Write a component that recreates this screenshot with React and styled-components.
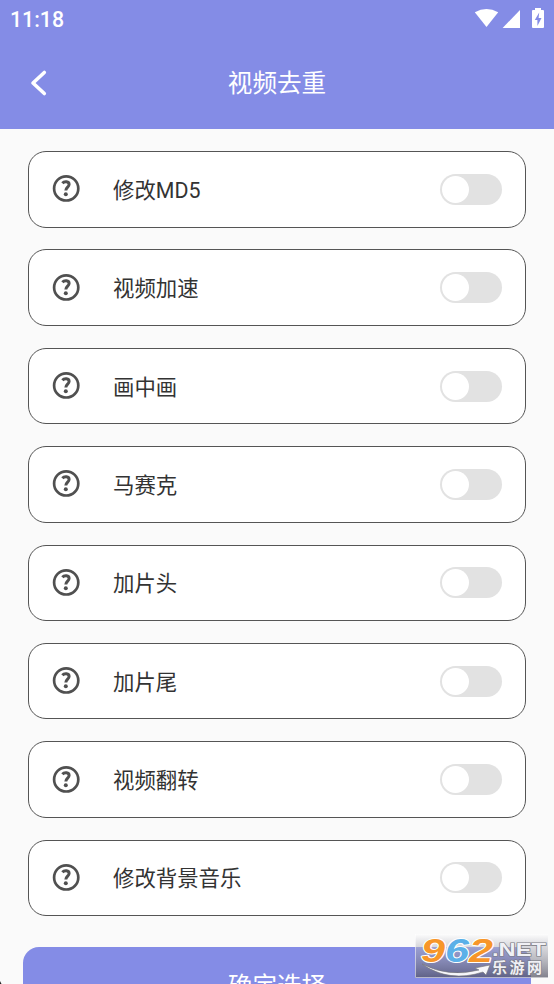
import React from "react";
import styled, { createGlobalStyle } from "styled-components";

const GlobalStyle = createGlobalStyle`
  * { box-sizing: border-box; }
  html, body { margin: 0; height: 984px; overflow: hidden; background: #fafafa; }
  body { font-family: Roboto, "Noto Sans CJK SC", sans-serif; }
`;

const Screen = styled.div`
  position: relative;
  display: flex;
  flex-direction: column;
  width: 554px;
  height: 984px;
  overflow: hidden;
  background: #fafafa;
`;

const Header = styled.header`
  flex: none;
  height: 129px;
  background: #848ce6;
  color: #fff;
`;

const StatusBar = styled.div`
  display: flex;
  justify-content: space-between;
  height: 37px;
  padding-left: 10px;
`;

const Clock = styled.time`
  font-size: 21.3px;
  font-weight: 500;
  line-height: 39px;
`;

const StatusIcons = styled.svg`
  display: block;
  width: 80px;
  height: 37px;
`;

const TitleBar = styled.div`
  display: grid;
  grid-template-columns: 78px 1fr 78px;
  align-items: center;
  height: 92px;
`;

const BackButton = styled.button`
  display: block;
  width: 78px;
  height: 92px;
  padding: 0;
  border: 0;
  background: none;
  color: inherit;

  svg { display: block; }
`;

const Title = styled.h1`
  margin: 0;
  padding-top: 1px;
  font-size: 24.6px;
  font-weight: 400;
  line-height: 36px;
  text-align: center;
`;

const OptionList = styled.ul`
  flex: none;
  display: flex;
  flex-direction: column;
  gap: 21.9px;
  margin: 0;
  padding: 22px 28px 31px;
  list-style: none;
`;

const OptionCard = styled.li`
  display: flex;
  align-items: center;
  height: 76.5px;
  padding: 0 23px;
  border: 1px solid #555;
  border-radius: 18px;
  background: #fff;
`;

const HelpIcon = styled.svg`
  flex: none;
  display: block;
  width: 28px;
  height: 28px;
  margin: 0 33px 2px 0;
`;

const OptionLabel = styled.span`
  flex: 1;
  padding-top: 3px;
  font-size: 21.4px;
  line-height: 32px;
  color: #333;
`;

const Switch = styled.button`
  display: flex;
  align-items: center;
  justify-content: ${({ $on }) => ($on ? "flex-end" : "flex-start")};
  width: 62px;
  height: 31px;
  padding: 0 2px;
  border: 0;
  border-radius: 16px;
  background: ${({ $on }) => ($on ? "#848ce6" : "#e2e2e2")};
`;

const Thumb = styled.span`
  width: 27px;
  height: 27px;
  border-radius: 50%;
  background: #fff;
`;

const ConfirmButton = styled.button`
  flex: none;
  height: 80px;
  margin: 0 23px;
  padding: 0;
  border: 0;
  border-radius: 16px;
  background: #848ce6;
  color: #fff;
  font: 400 24.6px/80px Roboto, "Noto Sans CJK SC", sans-serif;
`;

const Watermark = styled.svg`
  position: absolute;
  right: 6px;
  bottom: 6px;
  width: 133px;
  height: 44px;
`;

const CornerMark = styled.svg`
  position: absolute;
  left: 0;
  bottom: 0;
  width: 3px;
  height: 4px;
`;

const OPTIONS = ["修改MD5", "视频加速", "画中画", "马赛克", "加片头", "加片尾", "视频翻转", "修改背景音乐"];

function Option({ label }) {
  const [on, setOn] = React.useState(false);
  return (
    <OptionCard>
      <HelpIcon viewBox="0 0 28 28" fill="none" stroke="#505050">
        <circle cx="14.2" cy="14.4" r="12.1" strokeWidth="2.7" />
        <path d="M10.4 9.2C12.2 7 17.2 7 17.1 10.5C17 13 13.8 13.3 13.8 16.6" strokeWidth="3" />
        <circle cx="13.8" cy="20.2" r="2" fill="#505050" stroke="none" />
      </HelpIcon>
      <OptionLabel>{label}</OptionLabel>
      <Switch type="button" role="switch" aria-checked={on} aria-label={label} $on={on} onClick={() => setOn(!on)}>
        <Thumb />
      </Switch>
    </OptionCard>
  );
}

export default function App() {
  return (
    <Screen>
      <GlobalStyle />
      <Header>
        <StatusBar>
          <Clock>11:18</Clock>
          <StatusIcons viewBox="474 0 80 37" fill="#fff">
            <path d="M474.8 12.2Q486.5 5.6 498.2 12.2L486.5 27Z" />
            <path d="M502.6 28L520 10V28Z" />
            <path d="M535 8h6v2h2q1 0 1 1v16q0 1-1 1h-10q-1 0-1-1V11q0-1 1-1h2Z" />
            <path d="M539.2 12.5L534.8 20H537.4V26L541.5 18H538.6Z" fill="#848ce6" />
          </StatusIcons>
        </StatusBar>
        <TitleBar>
          <BackButton type="button" aria-label="返回">
            <svg width="78" height="92" viewBox="0 37 78 92" fill="none" stroke="#fff" strokeWidth="3.6" strokeLinecap="round" strokeLinejoin="round">
              <path d="M44.3 72.5L33 83L44.3 93.5" />
            </svg>
          </BackButton>
          <Title>视频去重</Title>
        </TitleBar>
      </Header>
      <OptionList>
        {OPTIONS.map((label) => <Option key={label} label={label} />)}
      </OptionList>
      <ConfirmButton type="button">确定选择</ConfirmButton>
      <CornerMark viewBox="0 0 3 4"><path d="M0 1L1.5 4H0Z" fill="#222" /></CornerMark>
      <Watermark viewBox="0 0 133 44" aria-label="962.NET 乐游网">
        <defs>
          <linearGradient id="shade" x1="0" y1="0" x2="0" y2="1">
            <stop offset="0" stopColor="#fff" stopOpacity=".6" />
            <stop offset=".35" stopColor="#aaaab4" stopOpacity=".5" />
            <stop offset="1" stopColor="#505060" stopOpacity=".72" />
          </linearGradient>
        </defs>
        <rect width="133" height="44" fill="url(#shade)" />
        <path d="M.5 0V43.5H133" fill="none" stroke="#fff" strokeOpacity=".55" />
        <g fontFamily="Liberation Sans, sans-serif" fontWeight="700" fontStyle="italic" fontSize="34" stroke="#fff" strokeWidth="2" paintOrder="stroke" strokeLinejoin="round">
          <text x="6" y="28" fill="#f79629" textLength="24" lengthAdjust="spacingAndGlyphs">9</text>
          <text x="30" y="28" fill="#5bb0e8" textLength="24" lengthAdjust="spacingAndGlyphs">6</text>
          <text x="54" y="28" fill="#f79629" textLength="24" lengthAdjust="spacingAndGlyphs">2</text>
        </g>
        <path d="M7 30Q34 44 64 36L60 34L75 31L71 41L68 38Q34 49 7 30Z" fill="#f7f7fb" stroke="#777" strokeWidth=".6" />
        <g fill="#f0f0f5" stroke="#777780" strokeWidth="1.2" paintOrder="stroke">
          <text x="77" y="22" fontFamily="Liberation Sans, sans-serif" fontWeight="700" fontSize="18.5" textLength="54" lengthAdjust="spacingAndGlyphs">.NET</text>
          <text x="77" y="39" fontFamily="Noto Sans CJK SC, sans-serif" fontWeight="700" fontSize="15" textLength="50">乐游网</text>
        </g>
      </Watermark>
    </Screen>
  );
}
